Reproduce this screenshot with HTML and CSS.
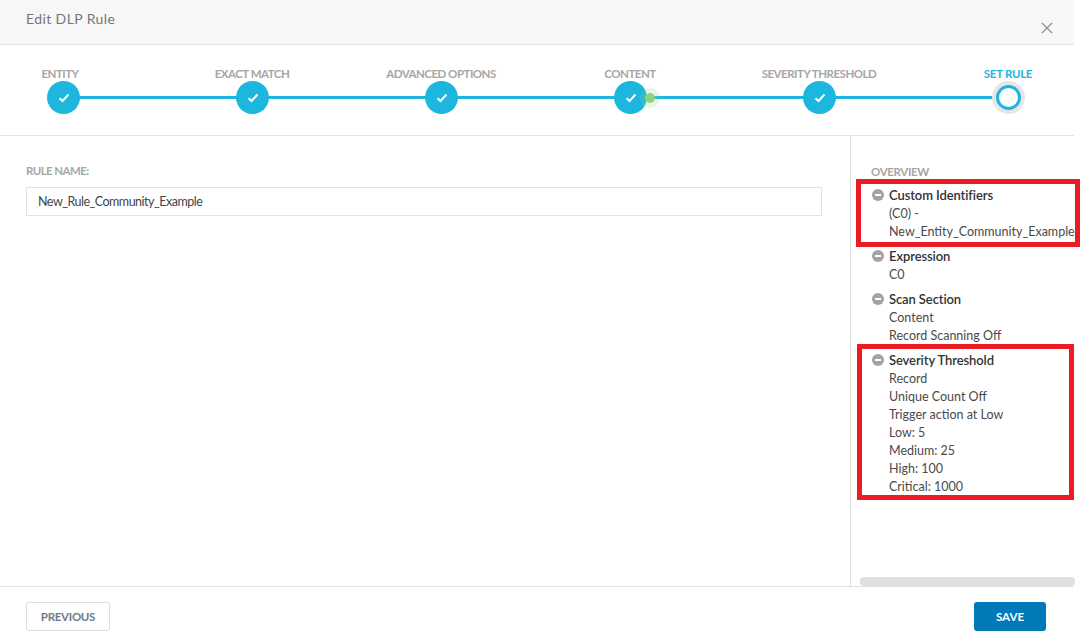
FILE: index.html
```html
<!DOCTYPE html>
<html lang="en">
<head>
    <meta charset="UTF-8">
    <meta name="viewport" content="width=device-width, initial-scale=1.0">
    <title>Edit DLP Rule</title>
    <link rel="stylesheet" href="styles.css">
</head>
<body>
    <div class="modal">
        <div class="cabecera">
            <span class="titulo">Edit DLP Rule</span>
            <svg class="cerrar" width="12" height="12" viewBox="0 0 12 12">
                <path d="M1 1L11 11M11 1L1 11" stroke="#8c8c8c" stroke-width="1.1" fill="none"/>
            </svg>
        </div>

        <div class="pasos">
            <div class="linea"></div>
            <div class="paso">
                <span class="paso-nombre primero">ENTITY</span>
                <span class="circulo"><svg width="12" height="10" viewBox="0 0 12 10"><path d="M1.5 5.2L4.5 8L10.5 1.5" stroke="#fff" stroke-width="2" fill="none"/></svg></span>
            </div>
            <div class="paso">
                <span class="paso-nombre">EXACT MATCH</span>
                <span class="circulo"><svg width="12" height="10" viewBox="0 0 12 10"><path d="M1.5 5.2L4.5 8L10.5 1.5" stroke="#fff" stroke-width="2" fill="none"/></svg></span>
            </div>
            <div class="paso">
                <span class="paso-nombre">ADVANCED OPTIONS</span>
                <span class="circulo"><svg width="12" height="10" viewBox="0 0 12 10"><path d="M1.5 5.2L4.5 8L10.5 1.5" stroke="#fff" stroke-width="2" fill="none"/></svg></span>
            </div>
            <div class="paso">
                <span class="paso-nombre">CONTENT</span>
                <span class="circulo"><svg width="12" height="10" viewBox="0 0 12 10"><path d="M1.5 5.2L4.5 8L10.5 1.5" stroke="#fff" stroke-width="2" fill="none"/></svg></span>
                <span class="punto"></span>
            </div>
            <div class="paso">
                <span class="paso-nombre">SEVERITY THRESHOLD</span>
                <span class="circulo"><svg width="12" height="10" viewBox="0 0 12 10"><path d="M1.5 5.2L4.5 8L10.5 1.5" stroke="#fff" stroke-width="2" fill="none"/></svg></span>
            </div>
            <div class="paso">
                <span class="paso-nombre activo">SET RULE</span>
                <span class="circulo-actual"></span>
            </div>
        </div>

        <div class="contenido">
            <div class="principal">
                <label class="etiqueta etiqueta-regla" for="nombreRegla">RULE NAME:</label>
                <input class="campo" type="text" id="nombreRegla" value="New_Rule_Community_Example">
            </div>
            <div class="resumen">
                <div class="etiqueta">OVERVIEW</div>

                <div class="grupo">
                    <div class="grupo-titulo"><span class="menos"></span>Custom Identifiers</div>
                    <div class="grupo-linea">(C0) -</div>
                    <div class="grupo-linea">New_Entity_Community_Example</div>
                </div>
                <div class="grupo">
                    <div class="grupo-titulo"><span class="menos"></span>Expression</div>
                    <div class="grupo-linea">C0</div>
                </div>
                <div class="grupo">
                    <div class="grupo-titulo"><span class="menos"></span>Scan Section</div>
                    <div class="grupo-linea">Content</div>
                    <div class="grupo-linea">Record Scanning Off</div>
                </div>
                <div class="grupo">
                    <div class="grupo-titulo"><span class="menos"></span>Severity Threshold</div>
                    <div class="grupo-linea">Record</div>
                    <div class="grupo-linea">Unique Count Off</div>
                    <div class="grupo-linea">Trigger action at Low</div>
                    <div class="grupo-linea">Low: 5</div>
                    <div class="grupo-linea">Medium: 25</div>
                    <div class="grupo-linea">High: 100</div>
                    <div class="grupo-linea">Critical: 1000</div>
                </div>

                <div class="barra"></div>
                <div class="marca marca-uno"></div>
                <div class="marca marca-dos"></div>
            </div>
        </div>

        <div class="pie">
            <button class="btn btn-previo" type="button">PREVIOUS</button>
            <button class="btn btn-guardar" type="button">SAVE</button>
        </div>
    </div>
</body>
</html>
```

FILE: styles.css
```css
html, body {
    margin: 0;
    padding: 0;
    background-color: #fff;
    overflow: hidden;
}
body {
    font-family: Lato, "Open Sans", sans-serif;
    color: #444;
}
.modal {
    width: 1074px;
    height: 633px;
    display: flex;
    flex-direction: column;
}
.cabecera {
    height: 44px;
    flex: none;
    display: flex;
    justify-content: space-between;
    padding: 0 21px 0 26px;
    background-color: #f7f7f7;
    border-bottom: 1px solid #e2e2e2;
}
.titulo {
    margin-top: 10px;
    font-size: 14px;
    line-height: 17px;
    letter-spacing: 0.4px;
    color: #757575;
}
.cerrar {
    margin-top: 22px;
}
.pasos {
    position: relative;
    height: 90px;
    flex: none;
    display: flex;
    justify-content: space-between;
    padding: 0 49px 0 46px;
    border-bottom: 1px solid #e2e2e2;
}
.linea {
    position: absolute;
    left: 63px;
    right: 66px;
    top: 51px;
    height: 3px;
    background-color: #1cb6de;
}
.paso {
    position: relative;
    width: 34px;
    display: flex;
    flex-direction: column;
    align-items: center;
    padding-top: 22px;
}
.paso-nombre {
    height: 14px;
    font-size: 11.5px;
    line-height: 14px;
    font-weight: 700;
    white-space: nowrap;
    color: #a6a6a6;
    letter-spacing: -0.5px;
}
.paso-nombre.primero {
    margin-right: 6px;
}
.paso-nombre.activo {
    color: #1cb6de;
    letter-spacing: -0.3px;
}
.circulo {
    position: relative;
    width: 33px;
    height: 33px;
    border-radius: 50%;
    background-color: #1cb6de;
    display: flex;
    align-items: center;
    justify-content: center;
}
.circulo svg {
    margin-left: 1px;
}
.circulo-actual {
    position: relative;
    box-sizing: border-box;
    width: 25px;
    height: 25px;
    margin-top: 4px;
    border-radius: 50%;
    border: 3px solid #1cb6de;
    background-color: #fff;
    box-shadow: 0 0 0 4px #e6e6e6;
}
.punto {
    position: absolute;
    left: 32px;
    top: 48px;
    width: 10px;
    height: 10px;
    border-radius: 50%;
    background-color: #8fd27f;
    box-shadow: 0 0 0 5px rgba(143, 210, 127, 0.2);
}
.contenido {
    flex: 1;
    display: flex;
    min-height: 0;
}
.principal {
    width: 796px;
    padding: 28px 28px 0 26px;
    border-right: 1px solid #e2e2e2;
}
.etiqueta {
    display: block;
    font-size: 11.5px;
    line-height: 14px;
    font-weight: 700;
    color: #a6a6a6;
    letter-spacing: -0.35px;
}
.etiqueta-regla {
    letter-spacing: -0.6px;
}
.campo {
    display: block;
    box-sizing: border-box;
    width: 796px;
    height: 29px;
    margin-top: 9px;
    padding: 0 11px;
    border: 1px solid #e2e2e2;
    font-family: Lato, "Open Sans", sans-serif;
    font-size: 12.5px;
    letter-spacing: -0.5px;
    color: #444;
    outline: none;
}
.resumen {
    position: relative;
    flex: 1;
    padding: 29px 0 0 20px;
    white-space: nowrap;
}
.grupo {
    margin-top: 6px;
    padding-left: 18px;
}
.etiqueta + .grupo {
    margin-top: 7px;
}
.grupo-titulo {
    position: relative;
    padding-bottom: 1px;
    font-size: 13px;
    line-height: 18px;
    font-weight: 600;
    letter-spacing: -0.1px;
    color: #333;
}
.grupo-linea {
    font-size: 12.5px;
    line-height: 18px;
    color: #4a4a4a;
}
.menos {
    position: absolute;
    left: -17px;
    top: 3px;
    width: 12px;
    height: 12px;
    border-radius: 50%;
    background-color: #a3a3a3;
}
.menos::after {
    content: "";
    position: absolute;
    left: 3px;
    top: 5px;
    width: 6px;
    height: 2px;
    background-color: #fff;
}
.barra {
    position: absolute;
    left: 9px;
    right: 0;
    bottom: 0;
    height: 9px;
    border-radius: 4px;
    background-color: #e0e0e0;
}
.marca {
    position: absolute;
    box-sizing: border-box;
    border: 5px solid #ec1c24;
}
.marca-uno {
    left: 5px;
    top: 43px;
    width: 224px;
    height: 68px;
}
.marca-dos {
    left: 6px;
    top: 208px;
    width: 217px;
    height: 156px;
}
.pie {
    box-sizing: border-box;
    height: 47px;
    flex: none;
    display: flex;
    justify-content: space-between;
    padding: 15px 28px 0 26px;
    border-top: 1px solid #e2e2e2;
}
.btn {
    height: 29px;
    border-radius: 3px;
    font-family: Lato, "Open Sans", sans-serif;
    font-size: 11.5px;
    font-weight: 700;
    padding: 0;
    cursor: pointer;
}
.btn-previo {
    width: 84px;
    border: 1px solid #dcdcdc;
    background-color: #fff;
    color: #6d7a8a;
    letter-spacing: -0.3px;
}
.btn-guardar {
    width: 72px;
    border: none;
    background-color: #0079b8;
    color: #fff;
}
```
